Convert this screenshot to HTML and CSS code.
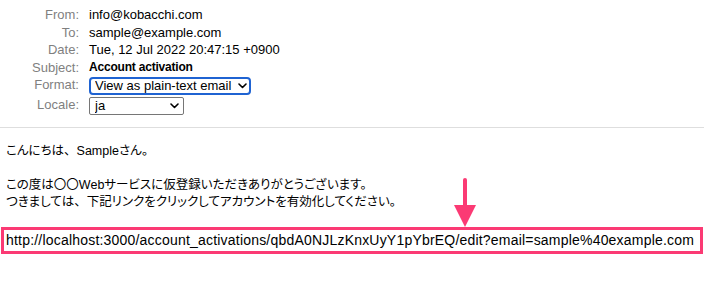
FILE: index.html
```html
<!DOCTYPE html>
<html lang="ja">
<head>
    <meta charset="UTF-8">
    <meta name="viewport" content="width=device-width, initial-scale=1.0">
    <title>Mailer Preview</title>
    <link rel="stylesheet" href="styles.css">
</head>
<body>
<header class="mail-header">
    <dl class="meta">
        <dt>From:</dt>
        <dd>info@kobacchi.com</dd>
        <dt>To:</dt>
        <dd>sample@example.com</dd>
        <dt>Date:</dt>
        <dd>Tue, 12 Jul 2022 20:47:15 +0900</dd>
        <dt>Subject:</dt>
        <dd class="subject">Account activation</dd>
        <dt>Format:</dt>
        <dd>
            <span class="select-wrap focused">
                <select class="format-select">
                    <option>View as plain-text email</option>
                    <option>View as HTML email</option>
                </select>
                <svg class="chevron" width="9" height="6" viewBox="0 0 9 6"><path d="M1 1l3.5 3.5L8 1" fill="none" stroke="#000" stroke-width="1.6" stroke-linecap="round" stroke-linejoin="round"/></svg>
            </span>
        </dd>
        <dt>Locale:</dt>
        <dd>
            <span class="select-wrap locale">
                <select class="locale-select">
                    <option>ja</option>
                    <option>en</option>
                </select>
                <svg class="chevron" width="9" height="6" viewBox="0 0 9 6"><path d="M1 1l3.5 3.5L8 1" fill="none" stroke="#000" stroke-width="1.6" stroke-linecap="round" stroke-linejoin="round"/></svg>
            </span>
        </dd>
    </dl>
</header>

<main class="mail-body">
    <p class="line">こんにちは<span class="punct">、</span>Sampleさん。</p>
    <p class="line gap">この度は〇〇Webサービスに仮登録いただきありがとうございます。</p>
    <p class="line">つきましては<span class="punct">、</span>下記リンクをクリックしてアカウントを有効化してください。</p>

    <div class="link-box">
        <!-- annotation arrow pointing at the link -->
        <svg class="arrow" width="24" height="50" viewBox="0 0 24 50"><rect x="10" y="0" width="4" height="30" rx="2" fill="#fb3a74"/><path d="M1 27h22L12 49z" fill="#fb3a74"/></svg>
        http://localhost:3000/account_activations/qbdA0NJLzKnxUyY1pYbrEQ/edit?email=sample%40example.com
    </div>
</main>
</body>
</html>
```

FILE: styles.css
```css
body {
    margin: 0;
    background-color: #ffffff;
    color: #000;
}

.mail-header {
    padding: 6px 0 11px;
    border-bottom: 1px solid #dedede;
    font-family: "Liberation Sans", Arial, sans-serif;
    font-size: 13px;
}

.meta {
    margin: 0;
    display: grid;
    grid-template-columns: 79px 1fr;
    grid-template-rows: 17.5px 17.5px 17.5px 17.5px 20px 20px;
    column-gap: 10px;
    line-height: 17.5px;
}

.meta dt {
    text-align: right;
    color: #7f7f7f;
}

.meta dd {
    margin: 0;
}

.meta .subject {
    font-weight: bold;
    font-size: 12px;
    letter-spacing: -0.2px;
}

.select-wrap {
    position: relative;
    display: inline-block;
    vertical-align: top;
    margin-top: 1px;
}

.select-wrap select {
    appearance: none;
    -webkit-appearance: none;
    font-family: "Liberation Sans", Arial, sans-serif;
    font-size: 13px;
    color: #000;
    background: #fff;
    margin: 0;
    outline: none;
    display: block;
}

.focused select {
    width: 162px;
    height: 18px;
    padding: 0 0 0 4px;
    border: 2px solid #1f63d2;
    border-radius: 4px;
    line-height: 14px;
}

.locale select {
    width: 95px;
    height: 18px;
    padding: 0 0 0 5px;
    border: 1px solid #767676;
    border-radius: 2px;
    line-height: 16px;
}

.chevron {
    position: absolute;
    top: 6px;
    pointer-events: none;
}

.focused .chevron {
    right: 4px;
}

.locale .chevron {
    right: 5px;
}

.mail-body {
    padding: 15px 6px 0;
    font-family: "Liberation Sans", "Noto Sans CJK JP", sans-serif;
    font-size: 12.5px;
    font-feature-settings: "palt";
}

.punct {
    font-feature-settings: normal;
}

.line {
    margin: 0;
    line-height: 17px;
}

.gap {
    margin-top: 17px;
}

.link-box {
    position: relative;
    margin: 16px -5px 0 -5px;
    height: 21px;
    border: 3px solid #fb3a74;
    padding: 0 0 0 2px;
    line-height: 21px;
    font-size: 14px;
    letter-spacing: 0.2px;
    white-space: nowrap;
}

.arrow {
    position: absolute;
    left: 449px;
    top: -52px;
}
```
